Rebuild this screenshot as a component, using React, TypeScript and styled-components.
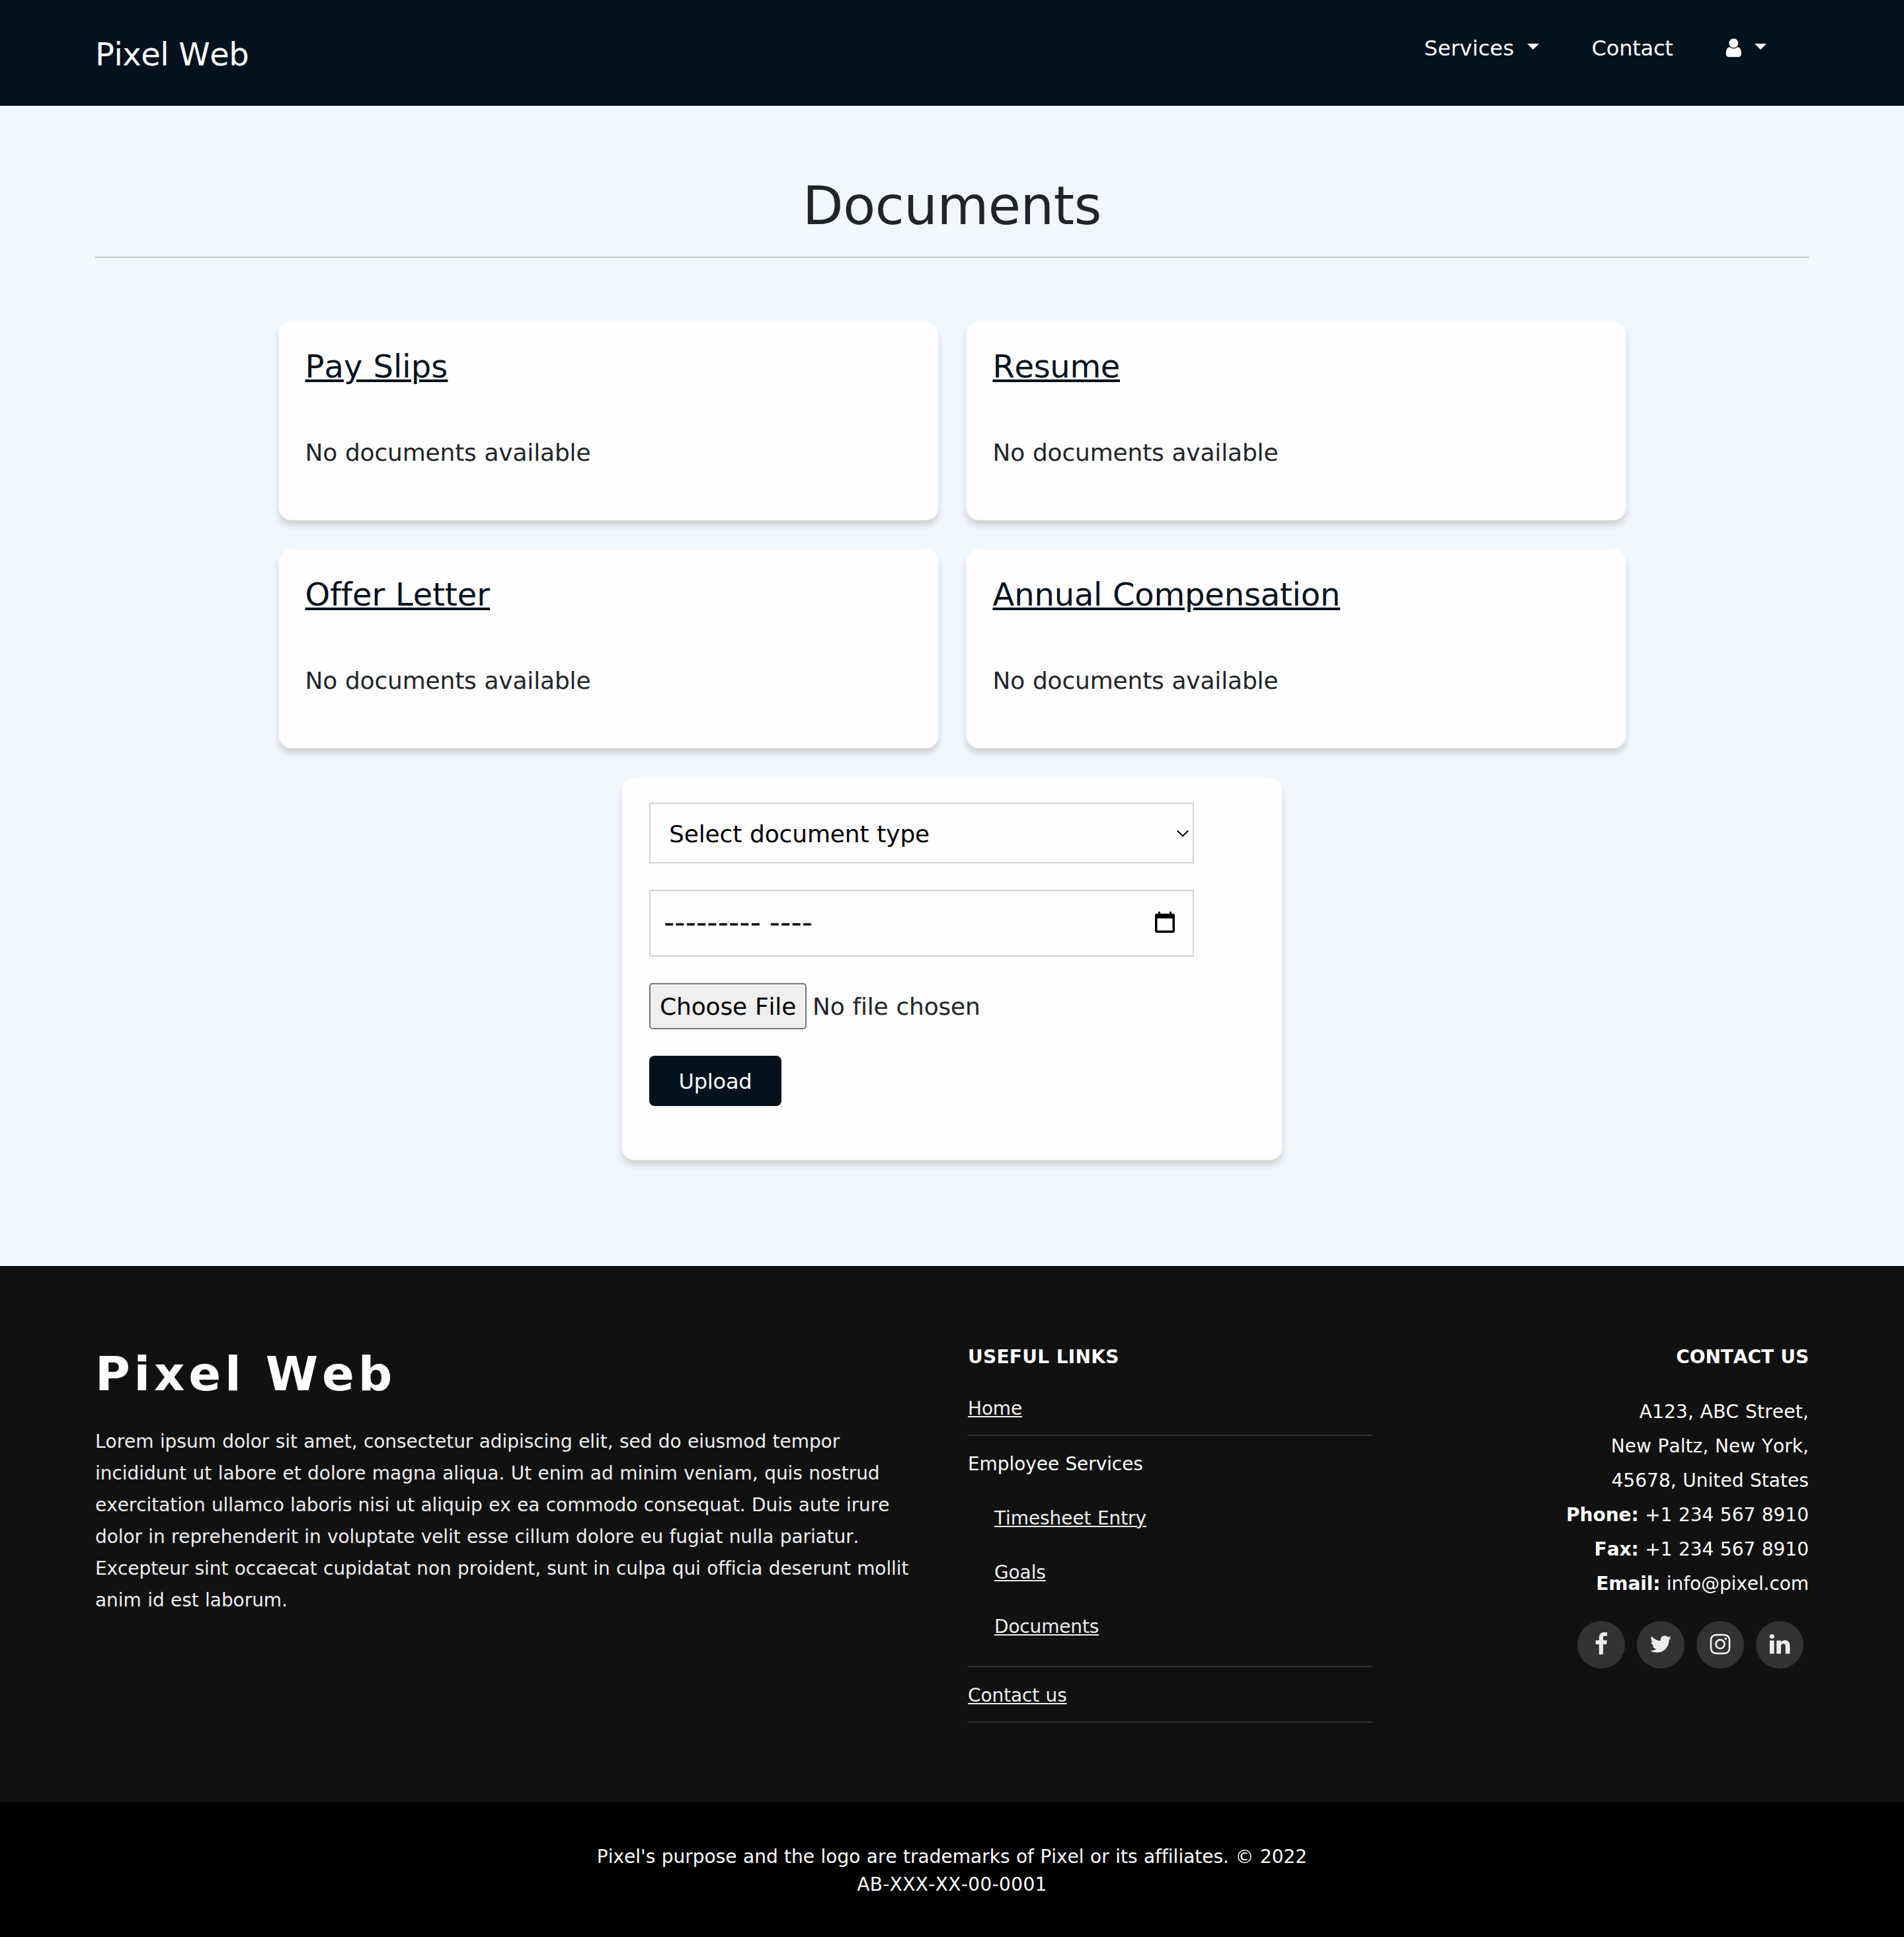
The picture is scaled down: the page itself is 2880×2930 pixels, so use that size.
import React from "react";
import styled, { createGlobalStyle, css } from "styled-components";

const GlobalStyle = createGlobalStyle`
  *, *::before, *::after { box-sizing: border-box; }
  body {
    margin: 0;
    background: #f0f7ff;
    color: #212529;
    font-family: Verdana, "DejaVu Sans", sans-serif;
    font-kerning: none;
    font-variant-ligatures: none;
    word-spacing: 0.034em;
  }
  h1, h2, h3, h4, p, ul { margin: 0; padding: 0; font-weight: 400; }
  ul { list-style: none; }
  a { color: inherit; }
`;

/* Letter spacing in px, tuned per label */
interface Tracked {
  $track?: number;
}
const tracking = css<Tracked>`
  letter-spacing: ${({ $track = 0 }) => $track}px;
`;

const Page = styled.div`
  display: flex;
  flex-direction: column;
  width: 2880px;
  height: 2930px;
`;

/* ---------- header ---------- */
const Header = styled.header`
  display: flex;
  align-items: flex-start;
  justify-content: space-between;
  height: 160px;
  padding: 0 208px 0 144px;
  background: #04121e;
  border-bottom: 1px solid #010418;
  color: #fff;
`;

const Brand = styled.a<Tracked>`
  margin-top: 46px;
  font-size: 48px;
  line-height: 72px;
  white-space: nowrap;
  ${tracking}
`;

const Nav = styled.nav`
  display: flex;
  margin-top: 49px;
`;

const NavItem = styled.div<Tracked & { $gap?: number }>`
  display: flex;
  margin-left: ${({ $gap = 0 }) => $gap}px;
  font-size: 32px;
  line-height: 48px;
  ${tracking}
`;

const Caret = styled.span<{ $gap: number }>`
  width: 0;
  height: 0;
  margin: 17px 0 0 ${({ $gap }) => $gap}px;
  border-top: 9.6px solid #fff;
  border-left: 9.6px solid transparent;
  border-right: 9.6px solid transparent;
`;

const UserGlyph = styled.svg`
  width: 32.6px;
  height: 32.6px;
  margin-top: 7.4px;
  fill: #fff;
`;

/* ---------- main ---------- */
const Main = styled.main`
  display: flex;
  flex-direction: column;
  align-items: center;
  height: 1755px;
  padding: 103px 144px 0;
`;

const Title = styled.h1<Tracked>`
  width: 100%;
  padding-bottom: 28px;
  border-bottom: 2px solid #bcc3c9;
  font-size: 80px;
  line-height: 97px;
  text-align: center;
  ${tracking}
`;

const Grid = styled.section`
  display: grid;
  grid-template-columns: 999px 999px;
  grid-auto-rows: 303px;
  gap: 42px 41px;
  margin-top: 94px;
`;

const Card = styled.article`
  padding: 39px;
  background: #fefefe;
  border: 2px solid #f8f8ff;
  border-radius: 20px;
  box-shadow: 0 8px 8px #d3d3d3;
`;

const CardTitle = styled.h3<Tracked>`
  color: #04121e;
  font-size: 48px;
  line-height: 58px;
  text-decoration: underline;
  text-decoration-thickness: 4px;
  text-underline-offset: 3px;
  ${tracking}
`;

const CardText = styled.p<Tracked>`
  margin-top: 74px;
  font-size: 36px;
  line-height: 55px;
  ${tracking}
`;

const FormCard = styled(Card)`
  display: flex;
  flex-direction: column;
  align-items: flex-start;
  gap: 40px;
  width: 1000px;
  height: 581px;
  margin-top: 42px;
  padding: 38px 40px 39px;
`;

const Field = styled.div<{ $height: number }>`
  display: flex;
  align-items: flex-start;
  justify-content: space-between;
  width: 824px;
  height: ${({ $height }) => $height}px;
  border: 2px solid #ced4da;
  color: #000;
`;

const SelectValue = styled.span<Tracked>`
  padding-left: 28px;
  font-size: 36px;
  line-height: 92px;
  ${tracking}
`;

const ChevronGlyph = styled.svg`
  width: 20px;
  height: 12px;
  margin: 39px 5px 0 0;
  fill: none;
  stroke: #000;
  stroke-width: 2;
`;

const MonthValue = styled.span<Tracked>`
  padding-left: 20px;
  font-size: 45px;
  line-height: 93px;
  word-spacing: -1.7px;
  ${tracking}
`;

const CalendarGlyph = styled.svg`
  width: 30px;
  height: 32px;
  margin: 31px 27px 0 0;
  fill: #000;
`;

const FileRow = styled.div`
  display: flex;
  height: 70px;
  font-size: 36px;
  line-height: 67px;
`;

const FileButton = styled.button<Tracked>`
  width: 238px;
  height: 70px;
  padding: 0 0 0 14px;
  background: #efefef;
  border: 2px solid #767676;
  border-radius: 5px;
  color: #000;
  font: inherit;
  word-spacing: inherit;
  text-align: left;
  display: flex;
  align-items: flex-start;
  ${tracking}
`;

const FileName = styled.span<Tracked>`
  margin: 2px 0 0 9px;
  ${tracking}
`;

const UploadButton = styled.button<Tracked>`
  display: flex;
  align-items: flex-start;
  width: 200px;
  height: 76px;
  padding: 0 0 0 44.5px;
  background: #04121e;
  border: 0;
  border-radius: 8px;
  color: #fff;
  font: 32px/78px Verdana, "DejaVu Sans", sans-serif;
  ${tracking}
`;

/* ---------- footer ---------- */
const Footer = styled.footer`
  display: grid;
  grid-template-columns: 1320px 612px 1fr;
  height: 811px;
  padding: 120px 144px 0;
  background: #111;
  color: #fff;
  font-size: 28px;
`;

const FooterBrand = styled.h2<Tracked>`
  font-size: 72px;
  font-weight: 700;
  line-height: 86px;
  ${tracking}
`;

const About = styled.p`
  margin-top: 36px;
  color: #eee;
  line-height: 48px;
  white-space: nowrap;
`;

const AboutLine = styled.span<Tracked>`
  display: block;
  ${tracking}
`;

const ColumnTitle = styled.h4<Tracked>`
  margin-top: 1px;
  font-weight: 700;
  line-height: 34px;
  ${tracking}
`;

const Links = styled.ul`
  padding-top: 19px;
`;

const LinkRow = styled.li<{ $top?: number; $bottom?: number }>`
  padding: ${({ $top = 21 }) => $top}px 0 ${({ $bottom = 18 }) => $bottom}px;
  border-bottom: 2px solid #333;
  line-height: 42px;
`;

const SubLinks = styled.ul`
  display: flex;
  flex-direction: column;
  gap: 40px;
  padding: 40px 0 0 40px;
`;

const FooterLink = styled.a<Tracked>`
  display: block;
  color: #eee;
  text-decoration: underline;
  text-decoration-thickness: 2px;
  text-underline-offset: 2px;
  ${tracking}
`;

const Plain = styled.span<Tracked>`
  display: block;
  ${tracking}
`;

const Contact = styled.div`
  display: flex;
  flex-direction: column;
  align-items: flex-end;
`;

const Address = styled.div`
  margin-top: 40px;
  line-height: 52px;
  text-align: right;
`;

const Label = styled.strong`
  font-weight: 700;
`;

const Socials = styled.div`
  display: flex;
  gap: 18px;
  margin: 30px 8px 0 0;
`;

const Social = styled.a`
  display: flex;
  justify-content: center;
  width: 72px;
  height: 72px;
  padding-top: 17px;
  background: #333;
  border-radius: 50%;

  svg {
    width: 36px;
    height: 36px;
    fill: #eee;
  }
`;

const Copyright = styled.div`
  height: 204px;
  padding-top: 62px;
  background: #000;
  color: #fff;
  font-size: 28px;
  line-height: 42px;
  text-align: center;
`;

const documents = [
  { title: "Pay Slips", track: 0.08 },
  { title: "Resume", track: -0.35 },
  { title: "Offer Letter", track: -0.03 },
  { title: "Annual Compensation", track: -0.18 },
];

const about = [
  { text: "Lorem ipsum dolor sit amet, consectetur adipiscing elit, sed do eiusmod tempor", track: -0.05 },
  { text: "incididunt ut labore et dolore magna aliqua. Ut enim ad minim veniam, quis nostrud", track: -0.03 },
  { text: "exercitation ullamco laboris nisi ut aliquip ex ea commodo consequat. Duis aute irure", track: -0.075 },
  { text: "dolor in reprehenderit in voluptate velit esse cillum dolore eu fugiat nulla pariatur.", track: -0.095 },
  { text: "Excepteur sint occaecat cupidatat non proident, sunt in culpa qui officia deserunt mollit", track: -0.095 },
  { text: "anim id est laborum.", track: -0.05 },
];

const services = [
  { text: "Timesheet Entry", track: -0.07 },
  { text: "Goals", track: -0.12 },
  { text: "Documents", track: -0.17 },
];

const address: { label?: string; text: string; track: number }[] = [
  { text: "A123, ABC Street,", track: 0.2 },
  { text: "New Paltz, New York,", track: 0.08 },
  { text: "45678, United States", track: 0.05 },
  { label: "Phone:", text: "+1 234 567 8910", track: 0 },
  { label: "Fax:", text: "+1 234 567 8910", track: 0 },
  { label: "Email:", text: "info@pixel.com", track: -0.08 },
];

const socials = [
  {
    name: "Facebook",
    path: "M1343 12v264h-157q-86 0-116 36t-30 108v189h293l-39 296h-254v759h-306v-759h-255v-296h255v-218q0-186 104-288.5t277-102.5q147 0 228 12z",
  },
  {
    name: "Twitter",
    path: "M1684 408q-67 98-162 167 1 14 1 42 0 130-38 259.5t-115.5 248.5-184.5 210.5-258 146-323 54.5q-271 0-496-145 35 4 78 4 225 0 401-138-105-2-188-64.5t-114-159.5q33 5 61 5 43 0 85-11-112-23-185.5-111.5t-73.5-205.5v-4q68 38 146 41-66-44-105-115t-39-154q0-88 44-163 121 149 294.5 238.5t371.5 99.5q-8-38-8-74 0-134 94.5-228.5t228.5-94.5q140 0 236 102 109-21 205-78-37 115-142 178 93-10 186-50z",
  },
  {
    name: "Instagram",
    path: "M1152 896q0-106-75-181t-181-75-181 75-75 181 75 181 181 75 181-75 75-181zm138 0q0 164-115 279t-279 115-279-115-115-279 115-279 279-115 279 115 115 279zm108-410q0 38-27 65t-65 27-65-27-27-65 27-65 65-27 65 27 27 65zm-502-220q-7 0-76.5-.5t-105.5 0-96.5 3-103 10-71.5 18.5q-50 20-88 58t-58 88q-11 29-18.5 71.5t-10 103-3 96.5 0 105.5.5 76.5-.5 76.5 0 105.5 3 96.5 10 103 18.5 71.5q20 50 58 88t88 58q29 11 71.5 18.5t103 10 96.5 3 105.5 0 76.5-.5 76.5.5 105.5 0 96.5-3 103-10 71.5-18.5q50-20 88-58t58-88q11-29 18.5-71.5t10-103 3-96.5 0-105.5-.5-76.5.5-76.5 0-105.5-3-96.5-10-103-18.5-71.5q-20-50-58-88t-88-58q-29-11-71.5-18.5t-103-10-96.5-3-105.5 0-76.5.5zm768 630q0 229-5 317-10 208-124 322t-322 124q-88 5-317 5t-317-5q-208-10-322-124t-124-322q-5-88-5-317t5-317q10-208 124-322t322-124q88-5 317-5t317 5q208 10 322 124t124 322q5 88 5 317z",
  },
  {
    name: "LinkedIn",
    path: "M477 625v991h-330v-991h330zm21-306q1 73-50.5 122t-135.5 49h-2q-82 0-132-49t-50-122q0-74 51.5-122.5t134.5-48.5 133 48.5 51 122.5zm1166 729v568h-329v-530q0-105-40.5-164.5t-126.5-59.5q-63 0-105.5 34.5t-63.5 85.5q-11 30-11 81v553h-329q2-399 2-647t-1-296l-1-48h329v144h-2q20-32 41-56t56.5-52 87-43.5 114.5-15.5q171 0 275 113.5t104 332.5z",
  },
];

export default function App() {
  return (
    <Page>
      <GlobalStyle />
      <Header>
        <Brand $track={-0.5}>Pixel Web</Brand>
        <Nav>
          <NavItem $track={0.12}>
            Services
            <Caret $gap={20} />
          </NavItem>
          <NavItem $gap={79.4} $track={-0.2}>Contact</NavItem>
          <NavItem $gap={75.7}>
            <UserGlyph viewBox="0 0 1792 1792">
              <path d="M1536 1399q0 109-62.5 187t-150.5 78h-854q-88 0-150.5-78t-62.5-187q0-85 8.5-160.5t31.5-152 58.5-131 94-89 134.5-34.5q131 128 313 128t313-128q76 0 134.5 34.5t94 89 58.5 131 31.5 152 8.5 160.5zm-256-887q0 159-112.5 271.5t-271.5 112.5-271.5-112.5-112.5-271.5 112.5-271.5 271.5-112.5 271.5 112.5 112.5 271.5z" />
            </UserGlyph>
            <Caret $gap={15} />
          </NavItem>
        </Nav>
      </Header>

      <Main>
        <Title $track={-0.47}>Documents</Title>
        <Grid>
          {documents.map((doc) => (
            <Card key={doc.title}>
              <CardTitle $track={doc.track}>{doc.title}</CardTitle>
              <CardText $track={-0.18}>No documents available</CardText>
            </Card>
          ))}
        </Grid>
        <FormCard>
          <Field $height={92}>
            <SelectValue $track={-0.15}>Select document type</SelectValue>
            <ChevronGlyph viewBox="0 0 20 12">
              <path d="M1.8 1.5 10 9.7 18.2 1.5" />
            </ChevronGlyph>
          </Field>
          <Field $height={101}>
            <MonthValue $track={0.1}>--------- ----</MonthValue>
            <CalendarGlyph viewBox="0 0 30 32">
              <path
                fillRule="evenodd"
                d="M5 0h3v3h14V0h3v3h2a3 3 0 0 1 3 3v23a3 3 0 0 1-3 3H3a3 3 0 0 1-3-3V6a3 3 0 0 1 3-3h2zM3.5 10.3v18.2h23V10.3z"
              />
            </CalendarGlyph>
          </Field>
          <FileRow>
            <FileButton $track={-0.14}>Choose File</FileButton>
            <FileName $track={-0.17}>No file chosen</FileName>
          </FileRow>
          <UploadButton $track={-0.2}>Upload</UploadButton>
        </FormCard>
      </Main>

      <Footer>
        <div>
          <FooterBrand $track={5.8}>Pixel Web</FooterBrand>
          <About>
            {about.map((line) => (
              <AboutLine key={line.text} $track={line.track}>{line.text}</AboutLine>
            ))}
          </About>
        </div>
        <div>
          <ColumnTitle $track={0.25}>USEFUL LINKS</ColumnTitle>
          <Links>
            <LinkRow>
              <FooterLink $track={-0.17}>Home</FooterLink>
            </LinkRow>
            <LinkRow $top={22} $bottom={38}>
              <Plain $track={-0.08}>Employee Services</Plain>
              <SubLinks>
                {services.map((item) => (
                  <li key={item.text}>
                    <FooterLink $track={item.track}>{item.text}</FooterLink>
                  </li>
                ))}
              </SubLinks>
            </LinkRow>
            <LinkRow $top={22}>
              <FooterLink $track={-0.1}>Contact us</FooterLink>
            </LinkRow>
          </Links>
        </div>
        <Contact>
          <ColumnTitle $track={-0.06}>CONTACT US</ColumnTitle>
          <Address>
            {address.map((line) => (
              <Plain key={line.label ?? line.text} $track={line.track}>
                {line.label && <Label>{line.label}</Label>} {line.text}
              </Plain>
            ))}
          </Address>
          <Socials>
            {socials.map((item) => (
              <Social key={item.name} aria-label={item.name}>
                <svg viewBox="0 0 1792 1792">
                  <path d={item.path} />
                </svg>
              </Social>
            ))}
          </Socials>
        </Contact>
      </Footer>

      <Copyright>
        <Plain $track={0}>Pixel's purpose and the logo are trademarks of Pixel or its affiliates. © 2022</Plain>
        <Plain $track={0.35}>AB-XXX-XX-00-0001</Plain>
      </Copyright>
    </Page>
  );
}
